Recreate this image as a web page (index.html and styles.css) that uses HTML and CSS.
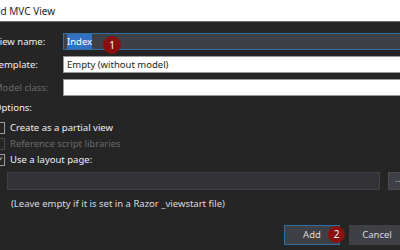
FILE: index.html
```html
<!DOCTYPE html>
<html lang="en">
<head>
    <meta charset="UTF-8">
    <title>Add MVC View</title>
    <link rel="stylesheet" href="styles.css">
</head>
<body>
    <div class="titlebar">
        <span class="title">Add MVC View</span>
    </div>
    <div class="dialog">
        <div class="fields">
            <div class="field">
                <label>View name:</label>
                <div class="textbox focused">
                    <span class="selected">Index</span>
                    <span class="badge badge-one">1</span>
                </div>
            </div>
            <div class="field">
                <label>Template:</label>
                <div class="textbox">Empty (without model)</div>
            </div>
            <div class="field disabled">
                <label>Model class:</label>
                <div class="textbox"></div>
            </div>
        </div>

        <div class="options-label">Options:</div>
        <div class="check"><span class="box"></span>Create as a partial view</div>
        <div class="check disabled"><span class="box"></span>Reference script libraries</div>
        <div class="check"><span class="box checked">&#10003;</span>Use a layout page:</div>

        <div class="layout-row">
            <div class="layout-input"></div>
            <div class="browse">...</div>
        </div>
        <div class="hint">(Leave empty if it is set in a Razor _viewstart file)</div>

        <div class="actions">
            <div class="button default">Add<span class="badge badge-two">2</span></div>
            <div class="button">Cancel</div>
        </div>
    </div>
</body>
</html>
```

FILE: styles.css
```css
body {
    margin: 0;
    width: 400px;
    height: 250px;
    overflow: hidden;
    background-color: #252526;
    color: #f1f1f1;
    font-family: "Noto Sans", "Open Sans", sans-serif;
    font-size: 9.5px;
}
.titlebar {
    height: 21px;
    background-color: #fff;
    border-bottom: 1px solid #6e6e6e;
    display: flex;
    align-items: center;
    margin-left: -12px;
}
.title {
    color: #1e1e1e;
    font-size: 10px;
}
.dialog {
    width: 416px;
    margin-left: -6px;
    padding-top: 11px;
}
.fields {
    display: flex;
    flex-direction: column;
    gap: 6px;
}
.field {
    display: flex;
    align-items: center;
    height: 17px;
}
.field label {
    width: 69px;
    flex: none;
}
.field.disabled label {
    color: #6a6a6a;
}
.textbox {
    position: relative;
    flex: 1;
    height: 15px;
    line-height: 15px;
    padding-left: 3px;
    background-color: #fff;
    border: 1px solid #9a9a9a;
    color: #1e1e1e;
}
.textbox.focused {
    background-color: #3f3f46;
    border-color: #2f6ea5;
    color: #fff;
}
.selected {
    background-color: #3470c2;
    padding: 1px 0;
}
.badge {
    position: absolute;
    width: 18px;
    height: 18px;
    border-radius: 50%;
    background-color: #8a1010;
    color: #fff;
    font-size: 10px;
    line-height: 18px;
    text-align: center;
}
.badge-one {
    left: 39px;
    top: 2px;
}
.badge-two {
    left: 43px;
    top: 0;
    width: 17px;
    height: 17px;
    line-height: 17px;
}
.options-label {
    margin-top: 4px;
    line-height: 16px;
}
.options-label + .check {
    margin-top: 4px;
}
.check {
    display: flex;
    align-items: center;
    line-height: 16px;
}
.box {
    width: 10px;
    height: 10px;
    border: 1px solid #9a9a9a;
    margin-right: 5px;
    margin-left: -1px;
    font-size: 9px;
    line-height: 10px;
    text-align: right;
    color: #f1f1f1;
}
.check.disabled {
    color: #6a6a6a;
}
.check.disabled .box {
    border-color: #4a4a4a;
}
.layout-row {
    display: flex;
    gap: 8px;
    margin-top: 4px;
    padding-left: 13px;
}
.layout-input {
    flex: 1;
    height: 16px;
    background-color: #333337;
    border: 1px solid #3f3f46;
}
.browse {
    width: 20px;
    height: 16px;
    background-color: #3f3f46;
    border: 1px solid #4a4a50;
    line-height: 12px;
    text-align: center;
    color: #cfcfcf;
}
.hint {
    margin-top: 6px;
    padding-left: 17px;
    line-height: 16px;
    color: #dcdcdc;
}
.actions {
    display: flex;
    justify-content: flex-end;
    gap: 9px;
    margin-top: 13px;
    padding-right: 5px;
}
.button {
    position: relative;
    width: 54px;
    height: 18px;
    line-height: 18px;
    text-align: center;
    background-color: #3f3f46;
    border: 1px solid #3f3f46;
    color: #dcdcdc;
}
.button.default {
    border-color: #2f6ea5;
}
```
